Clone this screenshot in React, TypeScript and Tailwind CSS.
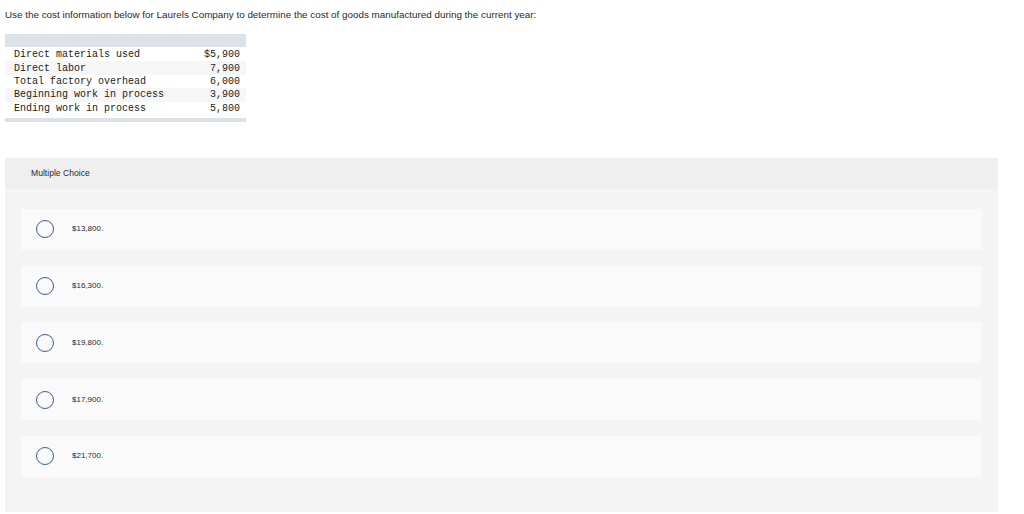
import React from "react";

const rows: [string, string][] = [
  ["Direct materials used", "$5,900"],
  ["Direct labor", "7,900"],
  ["Total factory overhead", "6,000"],
  ["Beginning work in process", "3,900"],
  ["Ending work in process", "5,800"],
];

const options = ["$13,800.", "$16,300.", "$19,800.", "$17,900.", "$21,700."];

export default function App() {
  return (
    <div className="w-[1024px] h-[514px] bg-white overflow-hidden" style={{ fontFamily: '"Liberation Sans", Arial, sans-serif' }}>
      <div className="pl-[5px] pt-[9px] text-[9.85px] leading-[12px] text-[#2a2a2a]">
        Use the cost information below for Laurels Company to determine the cost of goods manufactured during the current year:
      </div>
      <div className="ml-[5px] mt-[13px] w-[241px]">
        <div className="h-[13px] bg-[#dde1e8]" />
        <div className="pt-[1px]" style={{ fontFamily: '"Liberation Mono", "Courier New", monospace' }}>
          {rows.map(([l, v], i) => (
            <div
              key={l}
              className={`flex justify-between h-[13.4px] items-center pl-[9px] pr-[6px] text-[10px] text-[#222] ${i % 2 === 1 ? "bg-[#f6f6f6]" : "bg-white"}`}
            >
              <span>{l}</span>
              <span>{v}</span>
            </div>
          ))}
        </div>
        <div className="mt-[3px] h-[4px] bg-[#dde1e8]" />
      </div>
      <div className="ml-[5px] mt-[36px] w-[993px] h-[354px] bg-[#f4f4f4]">
        <div className="h-[31px] bg-[#efefef] flex items-center pl-[26px] text-[8.6px] text-[#2a2a2a]">
          Multiple Choice
        </div>
        <div className="pt-[20px] px-[16px] flex flex-col gap-[15.75px]">
          {options.map((o) => (
            <div key={o} className="h-[41px] bg-[#fafafa] flex items-center">
              <div className="ml-[15px] w-[18px] h-[18px] rounded-full border border-[#3a5f94]" />
              <span className="ml-[18px] text-[8px] text-[#2a2a2a]">{o}</span>
            </div>
          ))}
        </div>
      </div>
    </div>
  );
}
